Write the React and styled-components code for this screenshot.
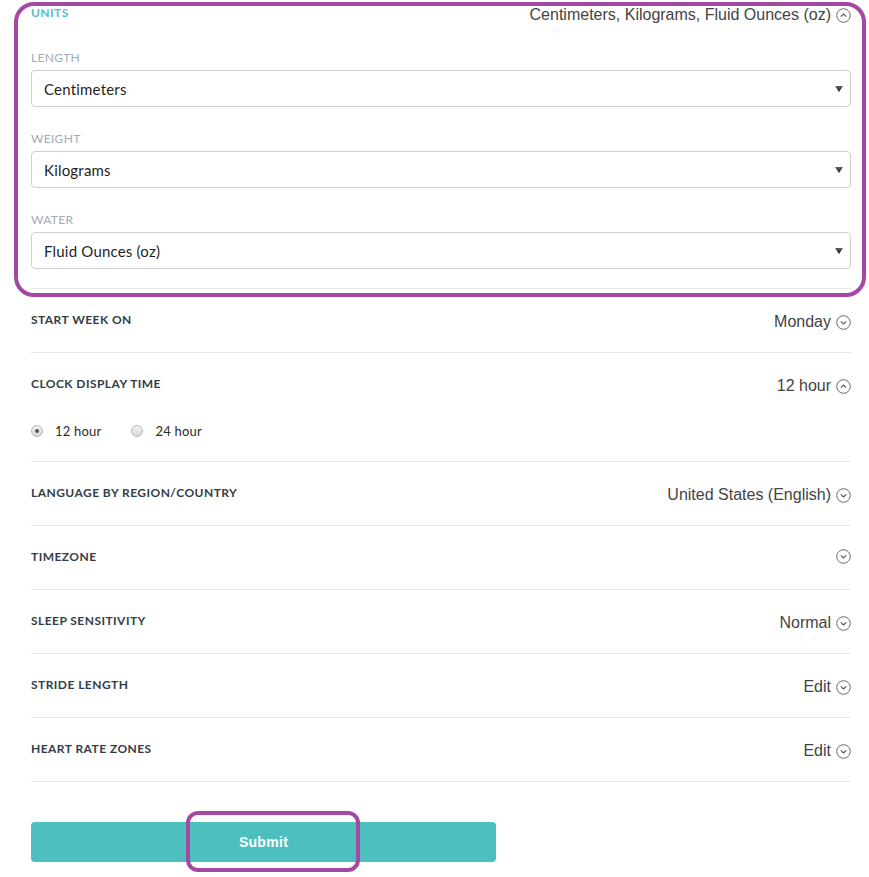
import React from "react";
import styled, { createGlobalStyle } from "styled-components";

const GlobalStyle = createGlobalStyle`
  html, body { margin: 0; padding: 0; background: #ffffff; }
  body { font-family: "Liberation Sans", Arial, sans-serif; }
  * { box-sizing: border-box; }
`;

const Canvas = styled.div`
  position: relative;
  width: 869px;
  min-height: 877px;
  padding: 0 18px 0 31px;
`;

const Settings = styled.div`
  width: 820px;
  display: flex;
  flex-direction: column;
`;

const Section = styled.div`
  display: flex;
  flex-direction: column;
  padding: ${(p) => (p.$first ? "5px 0 19px" : "23px 0 20px")};
  border-bottom: 1px solid #e6e6e6;
`;

const Header = styled.div`
  display: flex;
  justify-content: space-between;
  align-items: flex-start;
  min-height: 20px;
`;

const Label = styled.div`
  font-family: Lato, "Open Sans", sans-serif;
  font-weight: 700;
  font-size: 12px;
  line-height: 16px;
  letter-spacing: 0.45px;
  text-transform: uppercase;
  color: ${(p) => (p.$accent ? "#4fc4c9" : "#333d47")};
`;

const Value = styled.div`
  display: flex;
  align-items: center;
  gap: 5px;
  font-family: "Liberation Sans", Arial, sans-serif;
  font-size: 16px;
  line-height: 20px;
  color: #444444;
`;

const Field = styled.div`
  display: flex;
  flex-direction: column;
  margin-top: ${(p) => (p.$first ? "25px" : "24px")};
`;

const FieldLabel = styled.div`
  font-family: Lato, "Open Sans", sans-serif;
  font-size: 12px;
  line-height: 16px;
  letter-spacing: 0.3px;
  text-transform: uppercase;
  color: #a3aab5;
  margin-bottom: 4px;
`;

const SelectBox = styled.div`
  height: 37px;
  border: 1px solid #cfcfcf;
  border-radius: 4px;
  display: flex;
  align-items: center;
  justify-content: space-between;
  padding: 0 7px 0 12px;
  font-family: Lato, "Open Sans", sans-serif;
  font-size: 15px;
  letter-spacing: 0.2px;
  color: #1f1f1f;
`;

const RadioGroup = styled.div`
  display: flex;
  align-items: center;
  gap: 30px;
  margin-top: 25px;
  height: 20px;
`;

const RadioOption = styled.label`
  display: flex;
  align-items: center;
  gap: 12px;
  font-family: Lato, "Open Sans", sans-serif;
  font-size: 13px;
  letter-spacing: 0.2px;
  color: #2a2a2a;
`;

const RadioDot = styled.span`
  width: 12px;
  height: 12px;
  border-radius: 50%;
  border: 1px solid #b4b4b4;
  background: linear-gradient(#f4f4f4, #d9d9d9);
  display: flex;
  align-items: center;
  justify-content: center;
  &::after {
    content: "";
    width: 4px;
    height: 4px;
    border-radius: 50%;
    background: ${(p) => (p.$checked ? "#555" : "transparent")};
  }
`;

const SubmitButton = styled.button`
  margin-top: 40px;
  width: 465px;
  height: 40px;
  border: none;
  border-radius: 4px;
  background: #4ebfbf;
  color: #ffffff;
  font-family: "Liberation Sans", Arial, sans-serif;
  font-weight: 700;
  font-size: 14px;
  letter-spacing: 0.3px;
  cursor: pointer;
`;

const Annotation = styled.div`
  position: absolute;
  left: ${(p) => p.$x}px;
  top: ${(p) => p.$y}px;
  width: ${(p) => p.$w}px;
  height: ${(p) => p.$h}px;
  border: 4.5px solid #a349a4;
  border-radius: ${(p) => p.$r}px;
  pointer-events: none;
`;

const Chevron = ({ up }) => (
  <svg width="15" height="15" viewBox="0 0 15 15" fill="none">
    <circle cx="7.5" cy="7.5" r="6.8" stroke="#6a6a6a" strokeWidth="1" />
    <path
      d={up ? "M4.8 8.7 L7.5 6 L10.2 8.7" : "M4.8 6.3 L7.5 9 L10.2 6.3"}
      stroke="#555"
      strokeWidth="1.1"
    />
  </svg>
);

const Caret = () => (
  <svg width="8" height="6" viewBox="0 0 8 6">
    <defs>
      <linearGradient id="cg" x1="0" y1="0" x2="0" y2="1">
        <stop offset="0" stopColor="#666" />
        <stop offset="1" stopColor="#111" />
      </linearGradient>
    </defs>
    <path d="M0 0 H8 L4 6 Z" fill="url(#cg)" />
  </svg>
);

const Select = ({ value }) => (
  <SelectBox>
    <span>{value}</span>
    <Caret />
  </SelectBox>
);

const rows = [
  { label: "Start week on", value: "Monday" },
  { label: "Clock display time", value: "12 hour", open: true },
  { label: "Language by region/country", value: "United States (English)" },
  { label: "Timezone", value: "" },
  { label: "Sleep sensitivity", value: "Normal" },
  { label: "Stride length", value: "Edit" },
  { label: "Heart rate zones", value: "Edit" },
];

export default function App() {
  return (
    <>
      <GlobalStyle />
      <Canvas>
        <Settings>
          <Section $first>
            <Header>
              <Label $accent>Units</Label>
              <Value>
                Centimeters, Kilograms, Fluid Ounces (oz)
                <Chevron up />
              </Value>
            </Header>
            <Field $first>
              <FieldLabel>Length</FieldLabel>
              <Select value="Centimeters" />
            </Field>
            <Field>
              <FieldLabel>Weight</FieldLabel>
              <Select value="Kilograms" />
            </Field>
            <Field>
              <FieldLabel>Water</FieldLabel>
              <Select value="Fluid Ounces (oz)" />
            </Field>
          </Section>
          {rows.map((r) => (
            <Section key={r.label}>
              <Header>
                <Label>{r.label}</Label>
                <Value>
                  {r.value}
                  <Chevron up={r.open} />
                </Value>
              </Header>
              {r.open && (
                <RadioGroup>
                  <RadioOption>
                    <RadioDot $checked />
                    12 hour
                  </RadioOption>
                  <RadioOption>
                    <RadioDot />
                    24 hour
                  </RadioOption>
                </RadioGroup>
              )}
            </Section>
          ))}
          <SubmitButton>Submit</SubmitButton>
        </Settings>
        <Annotation $x={14} $y={2} $w={852} $h={295} $r={20} />
        <Annotation $x={186} $y={811} $w={174} $h={61} $r={12} />
      </Canvas>
    </>
  );
}
